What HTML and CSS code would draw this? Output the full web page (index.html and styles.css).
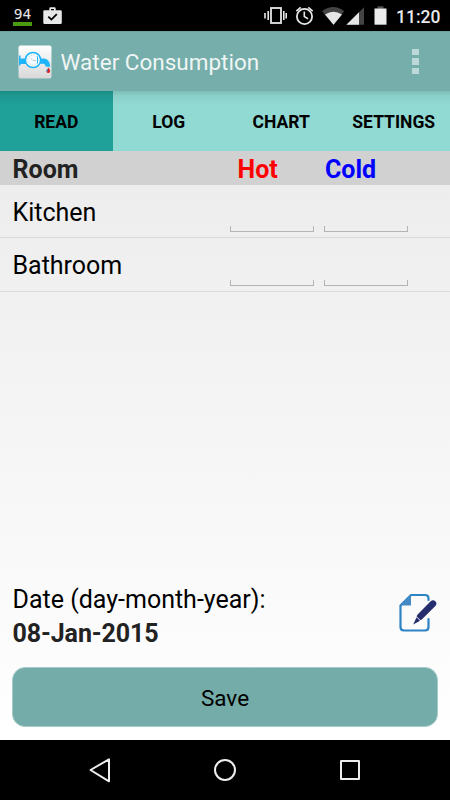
FILE: index.html
```
<!DOCTYPE html>
<html lang="en">
<head>
    <meta charset="UTF-8">
    <title>Water Consumption</title>
    <link rel="stylesheet" href="styles.css">
</head>
<body>
    <div class="status-bar">
        <div class="status-left">
            <div class="battery-percent">94</div>
            <svg class="icon-work" width="20" height="18" viewBox="0 0 20 18">
                <path fill="#e8e8e8" fill-rule="evenodd" d="M6.3 3.2V1.5Q6.3.3 7.5.3h4q1.2 0 1.2 1.2v1.7h4.8q1.3 0 1.3 1.3v11.2q0 1.3-1.3 1.3h-16Q.3 17 .3 15.7V4.5q0-1.3 1.3-1.3zM8 3.2h3V1.9H8z"/>
                <path fill="none" stroke="#000" stroke-width="1.8" d="M5.3 9.6l3.1 3 5.4-5.5"/>
            </svg>
        </div>
        <div class="status-right">
            <svg width="128" height="22" viewBox="262 5 128 22">
                <g fill="none" stroke="#e6e6e6" stroke-width="1.6">
                    <rect x="271" y="8" width="10" height="15" stroke-width="1.8"/>
                    <path d="M268.2 11v9M265 13v5.5M283.8 11v9M286.2 13v5.5"/>
                    <circle cx="304.5" cy="16.5" r="7.6" stroke-width="1.8"/>
                    <path d="M304.3 11.5v5l3.8 2.4M296.3 11.2l4.4-3.9M312.7 11.2l-4.4-3.9"/>
                </g>
                <path fill="#444" d="M322.2 11.2Q333.2 2.8 344.2 11.2L333.5 24.7z"/>
                <path fill="#e6e6e6" d="M325 14.5q8.5-5.5 17 0l-8.5 10.2z"/>
                <path fill="#444" d="M364 7.2v17.5h-17.6z"/>
                <path fill="#e6e6e6" d="M359 12.2v12.5h-12.6z"/>
                <path fill="#555" d="M377.5 6.3h6v2.4h-6z"/>
                <rect x="374.5" y="8.5" width="12" height="16.2" fill="#ececec"/>
            </svg>
            <span class="clock">11:20</span>
        </div>
    </div>

    <div class="app-bar">
        <svg class="app-icon" width="34" height="34" viewBox="0 0 34 34">
            <defs>
                <linearGradient id="tile" x1="0" y1="0" x2="0" y2="1">
                    <stop offset="0" stop-color="#fff"/>
                    <stop offset="1" stop-color="#d8d8d8"/>
                </linearGradient>
            </defs>
            <rect x=".5" y=".5" width="33" height="33" rx="2" fill="url(#tile)"/>
            <path fill="#1fb5fa" d="M1 10.5h1.500v3H9v5.500H2.500v1.500H1zM21 13.500h5q6 .8 6.300 8.300h-4.600q-.3-3-2.700-3H21z"/>
            <circle cx="15" cy="15" r="7.6" fill="#f5fbff" stroke="#1fb5fa" stroke-width="1.5"/>
            <circle cx="15" cy="15" r="5" fill="none" stroke="#a9c3d0" stroke-width=".8" stroke-dasharray="1 1.6"/>
            <path stroke="#a0b8c4" stroke-width=".7" fill="none" d="M12.5 13l2.5 2.5h3"/>
            <path stroke="#1fb5fa" d="M19.5 11.5v7"/>
            <path fill="#d22" d="M30.5 22.5q2 2.8 1.6 4.2-.5 1.2-1.8 1.2t-1.8-1.2q-.3-1.3 2-4.2z"/>
            <circle cx="29.3" cy="25.5" r=".9" fill="#3a87c8"/>
        </svg>
        <h1>Water Consumption</h1>
        <div class="overflow">
            <span></span>
            <span></span>
            <span></span>
        </div>
    </div>

    <div class="tabs">
        <div class="tab active">READ</div>
        <div class="tab">LOG</div>
        <div class="tab">CHART</div>
        <div class="tab">SETTINGS</div>
    </div>

    <div class="content">
        <div class="row row-head">
            <span class="room">Room</span>
            <span class="hot">Hot</span>
            <span class="cold">Cold</span>
        </div>
        <div class="row">
            <span class="room">Kitchen</span>
            <span class="field"></span>
            <span class="field"></span>
        </div>
        <div class="row row-last">
            <span class="room">Bathroom</span>
            <span class="field"></span>
            <span class="field"></span>
        </div>

        <div class="date">
            <div class="date-text">
                <p>Date (day-month-year):</p>
                <p class="date-value">08-Jan-2015</p>
            </div>
            <svg class="icon-edit" width="40" height="40" viewBox="0 0 40 40">
                <path fill="none" stroke="#2d84c5" stroke-width="2.2" stroke-linecap="round" d="M29.5 7V5.2Q29.5 2 26 2H12L1.5 12.5V34q0 3.5 3.500 3.500h21q3.500 0 3.500-3.500v-8"/>
                <path fill="#4389c6" d="M1 12.5L12 1.2v11.3z"/>
                <path stroke="#252d6c" stroke-width="6.6" stroke-linecap="round" d="M21.2 23.5L34 10.7"/>
                <path fill="#252d6c" d="M17.6 24.3l3.5 3.4-6.9 3.8z"/>
                <path stroke="#fff" stroke-width=".8" d="M17.3 23.5l4.7 4.7"/>
            </svg>
        </div>
        <button class="save">Save</button>
    </div>

    <div class="nav-bar">
        <svg width="450" height="60" viewBox="0 0 450 60">
            <g fill="none" stroke="#eee" stroke-width="2" stroke-linejoin="round">
                <path d="M109 19.3v22L90.5 30z"/>
                <circle cx="225" cy="30" r="10"/>
                <rect x="341" y="21" width="18" height="18"/>
            </g>
        </svg>
    </div>
</body>
</html>
```
FILE: styles.css
```
* {
    box-sizing: border-box;
    margin: 0;
    padding: 0;
}
body {
    width: 450px;
    height: 800px;
    display: flex;
    flex-direction: column;
    font-family: Roboto, sans-serif;
    background-color: black;
    overflow: hidden;
}

.status-bar {
    height: 31px;
    display: flex;
    justify-content: space-between;
    color: #e8e8e8;
}
.status-left {
    display: flex;
    padding: 7px 0 0 13px;
    gap: 11px;
}
.battery-percent {
    width: 19px;
    height: 19px;
    border-bottom: 4px solid #4a9a12;
    font-family: "DejaVu Sans Mono", monospace;
    font-size: 14.5px;
    line-height: 14px;
    text-align: center;
}
.status-right {
    display: flex;
    padding: 5px 9px 0 0;
    gap: 6px;
}
.clock {
    width: 45px;
    font-size: 17.5px;
    font-weight: 500;
    line-height: 24px;
}

.app-bar {
    height: 60px;
    display: flex;
    align-items: center;
    padding: 0 31px 0 18px;
    background-color: #75aeaa;
    border-top: 1px solid #6ea4a0;
}
h1 {
    flex: 1;
    margin-left: 8.5px;
    font-size: 22.5px;
    font-weight: 400;
    color: #f0f5f5;
}
.overflow {
    display: flex;
    flex-direction: column;
    gap: 3px;
}
.overflow span {
    width: 7px;
    height: 6.5px;
    background-color: #bcd9d7;
}

.tabs {
    height: 60px;
    display: grid;
    grid-template-columns: repeat(4, 1fr);
    background: linear-gradient(#7dbdb7, #8ad0c9 5px, #91d9d3 14px);
}
.tab {
    display: flex;
    align-items: center;
    justify-content: center;
    padding-top: 2px;
    font-size: 17.5px;
    font-weight: 700;
}
.active {
    background: linear-gradient(#1b8c86, #1d9891 5px, #1fa199 14px);
}

.content {
    height: 589px;
    display: flex;
    flex-direction: column;
    padding-bottom: 13px;
    background: linear-gradient(#ececec, #fff);
}
.row {
    height: 53px;
    display: grid;
    grid-template-columns: 217px 84px 84px;
    column-gap: 10px;
    padding: 0 0 5px 12.5px;
    align-items: center;
    border-bottom: 1px solid #dadada;
    font-size: 25px;
}
.row .room {
    margin-right: -10px;
    padding-top: 7px;
}
.row .field {
    margin-left: -9.5px;
}
.row-head {
    height: 34px;
    padding: 2px 0 0 12.5px;
    border: none;
    background-color: #d1d1d1;
    font-weight: 700;
}
.row-head .room {
    padding-top: 0;
    color: #222;
}
.hot {
    margin-left: -2px;
    color: red;
}
.cold {
    margin-left: -8.5px;
    color: blue;
}
.field {
    width: 84px;
    height: 6px;
    align-self: end;
    border: 1px solid #b4b4b4;
    border-top: none;
}
.row-last {
    height: 54px;
}
.row-last .room {
    padding-top: 6px;
}

.date {
    display: flex;
    justify-content: space-between;
    margin-top: auto;
    padding: 0 11px 0 12.5px;
    font-size: 25px;
    line-height: 33.5px;
}
.date-value {
    font-weight: 700;
    letter-spacing: -0.1px;
    color: #222;
}
.icon-edit {
    margin-top: 10px;
}
.save {
    height: 60px;
    margin: 17px 12px 0;
    padding-top: 2px;
    border: 1px solid #a5cbc8;
    border-radius: 13px;
    background-color: #73aca8;
    font-family: inherit;
    font-size: 22.5px;
    color: black;
}

.nav-bar {
    height: 60px;
}
```
